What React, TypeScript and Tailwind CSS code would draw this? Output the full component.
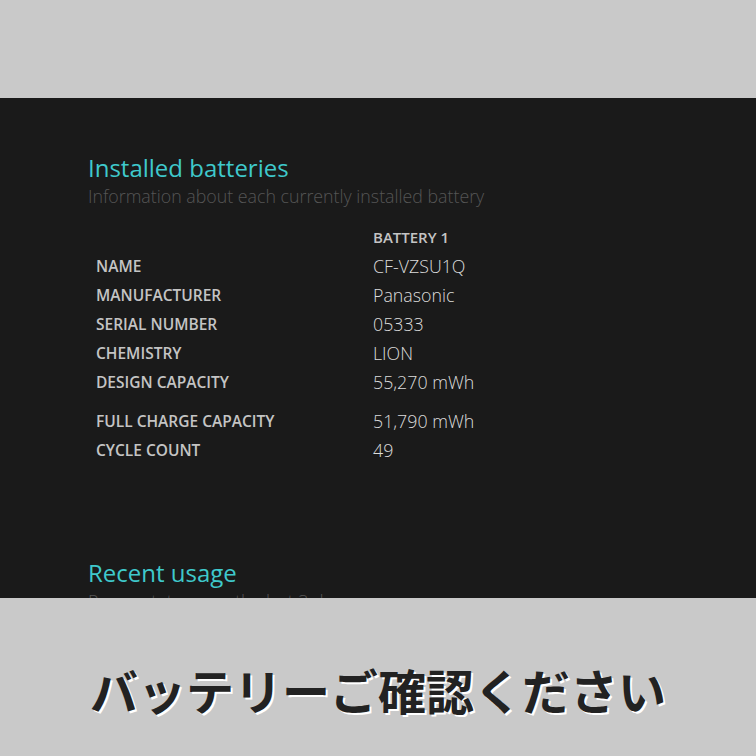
const ROWS: { label: string; value: string; gap?: boolean }[] = [
  { label: 'NAME', value: 'CF-VZSU1Q' },
  { label: 'MANUFACTURER', value: 'Panasonic' },
  { label: 'SERIAL NUMBER', value: '05333' },
  { label: 'CHEMISTRY', value: 'LION' },
  { label: 'DESIGN CAPACITY', value: '55,270 mWh' },
  { label: 'FULL CHARGE CAPACITY', value: '51,790 mWh', gap: true },
  { label: 'CYCLE COUNT', value: '49' },
];

export default function App() {
  return (
    <div className="w-[756px] h-[756px] bg-[#c9c9c9] flex flex-col" style={{ fontFamily: '"Open Sans", "Noto Sans", sans-serif' }}>
      <div className="h-[98px]" />
      <div className="h-[500px] bg-[#1a1a1a] overflow-hidden pl-[88px] pt-[55px]">
        <h2 className="text-[24px] leading-[30px] text-[#3fc9cc]">Installed batteries</h2>
        <p className="mt-[1px] text-[17.8px] leading-[25px] text-[#555555] font-light">Information about each currently installed battery</p>

        <div className="mt-[14px] pl-[8px]">
          <div className="flex h-[29px] items-center">
            <div className="w-[277px]" />
            <div className="text-[15px] font-semibold text-[#c4c4c4]">BATTERY 1</div>
          </div>
          {ROWS.map((r) => (
            <div key={r.label} className={`flex h-[29px] items-center ${r.gap ? 'mt-[10px]' : ''}`}>
              <div className="w-[277px] text-[15.5px] font-semibold text-[#c4c4c4]">{r.label}</div>
              <div className="text-[17.8px] text-[#dcdcdc] font-light">{r.value}</div>
            </div>
          ))}
        </div>

        <h2 className="mt-[93px] text-[24px] leading-[30px] text-[#3fc9cc]">Recent usage</h2>
        <p className="mt-[1px] text-[17.8px] leading-[25px] text-[#555555] font-light">Power states over the last 3 days</p>
      </div>
      <div className="flex-1 flex items-start justify-center pt-[67px]">
        <p
          className="text-[48px] leading-[1] font-bold text-[#222222] [text-shadow:2px_2px_0_#ffffff]"
          style={{ fontFamily: '"Noto Sans CJK JP", sans-serif' }}
        >
          バッテリーご確認ください
        </p>
      </div>
    </div>
  );
}
